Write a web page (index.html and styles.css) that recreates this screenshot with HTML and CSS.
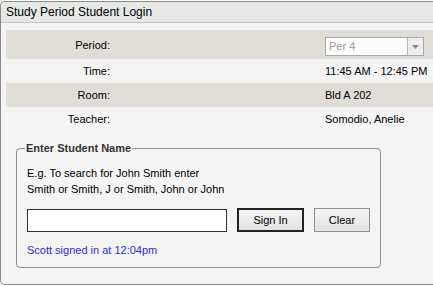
FILE: index.html
```html
<!DOCTYPE html>
<html lang="en">
<head>
    <meta charset="UTF-8">
    <title>Study Period Student Login</title>
    <link rel="stylesheet" href="styles.css">
</head>
<body>

<div class="panel">
    <div class="panel-title">Study Period Student Login</div>

    <div class="info">
        <div class="info-row shaded">
            <div class="info-label">Period:</div>
            <div class="info-value">
                <div class="select">
                    <span class="select-text">Per 4</span>
                    <span class="select-btn">
                        <svg width="7" height="4" viewBox="0 0 7 4"><path d="M0 0 L7 0 L3.5 4 Z" fill="#8a8a8a"/></svg>
                    </span>
                </div>
            </div>
        </div>
        <div class="info-row">
            <div class="info-label">Time:</div>
            <div class="info-value">11:45 AM - 12:45 PM</div>
        </div>
        <div class="info-row shaded">
            <div class="info-label">Room:</div>
            <div class="info-value">Bld A 202</div>
        </div>
        <div class="info-row">
            <div class="info-label">Teacher:</div>
            <div class="info-value">Somodio, Anelie</div>
        </div>
    </div>

    <fieldset class="student-box">
        <legend>Enter Student Name</legend>
        <p class="hint">E.g. To search for John Smith enter<br>Smith or Smith, J or Smith, John or John</p>
        <div class="search-row">
            <input type="text" id="studentName">
            <button class="btn btn-default">Sign In</button>
            <button class="btn">Clear</button>
        </div>
        <div class="status">Scott signed in at 12:04pm</div>
    </fieldset>
</div>

</body>
</html>
```

FILE: styles.css
```css
body {
    margin: 0;
    background: #ffffff;
    font-family: "Liberation Sans", Arial, sans-serif;
    font-size: 11px;
    color: #000;
}
.panel {
    margin-top: 1px;
    height: 284px;
    background: #f4f4f4;
    border: 1px solid #8a8a8a;
    border-right: none;
    border-radius: 5px 0 0 5px;
    box-sizing: border-box;
}
.panel-title {
    height: 20px;
    line-height: 20px;
    padding-left: 5px;
    font-size: 12px;
    background: #e6e8e6;
    border-bottom: 1px solid #c4c4c4;
    border-radius: 5px 0 0 0;
}
.info {
    margin: 7px 0 0 5px;
}
.info-row {
    display: grid;
    grid-template-columns: 104px 1fr;
    column-gap: 215px;
    align-items: center;
    height: 24px;
}
.info-row:first-child {
    height: 29px;
}
.info-row:last-child {
    height: 23px;
}
.shaded {
    background: #e0ddd6;
}
.info-label {
    text-align: right;
}
.select {
    display: flex;
    width: 99px;
    height: 19px;
    margin-top: 4px;
    border: 1px solid #a9a9a9;
    box-sizing: border-box;
    background: #fbfbfb;
}
.select-text {
    flex: 1;
    padding-left: 3px;
    line-height: 17px;
    color: #a0a0a0;
}
.select-btn {
    width: 15px;
    display: flex;
    align-items: center;
    justify-content: center;
    border-left: 1px solid #b5b5b5;
    background: #eeeeee;
}
.student-box {
    margin: 12px 0 0 15px;
    width: 365px;
    height: 126px;
    padding: 0 10px;
    border: 1px solid #8c8c8c;
    border-radius: 4px;
    box-sizing: border-box;
}
.student-box legend {
    padding: 0 1px;
    margin-left: -2px;
    font-weight: bold;
    color: #333;
    line-height: 13px;
}
.hint {
    margin: 10px 0 0;
    line-height: 16px;
}
.search-row {
    display: flex;
    align-items: center;
    margin-top: 11px;
}
.search-row input {
    width: 200px;
    height: 23px;
    margin: 0;
    border: 1px solid #333;
    box-sizing: border-box;
    background: #fff;
}
.btn {
    height: 24px;
    margin-left: 10px;
    padding: 0;
    width: 56px;
    font-family: inherit;
    font-size: 11px;
    background: linear-gradient(#f4f4f4, #e2e2e2);
    border: 1px solid #8f8f8f;
    box-sizing: border-box;
}
.btn-default {
    width: 67px;
    border: 2px solid #222;
}
.status {
    margin-top: 12px;
    color: #2a2ae8;
}
```
